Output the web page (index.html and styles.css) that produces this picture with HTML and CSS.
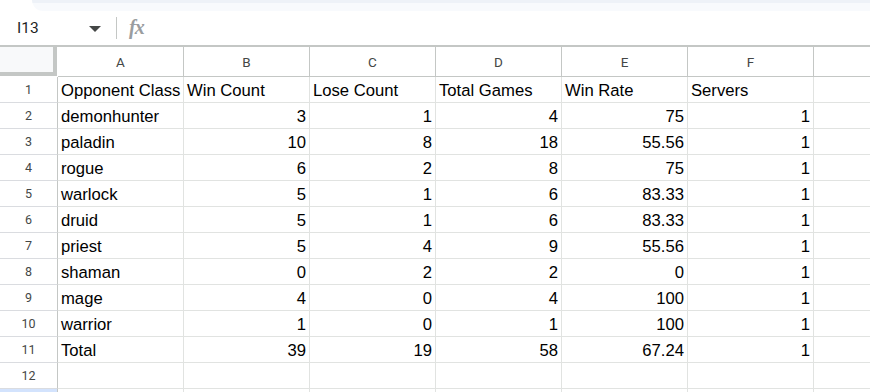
FILE: index.html
```html
<!DOCTYPE html>
<html>
<head>
<meta charset="UTF-8">
<title>Opponent Class Stats</title>
<link rel="stylesheet" href="styles.css">
</head>
<body>
<div class="top-band"></div>
<div class="formula-bar">
  <div class="name-box">
    <span class="cell-ref">I13</span>
    <span class="caret"></span>
  </div>
  <div class="divider"></div>
  <span class="fx">fx</span>
</div>

<div class="sheet">
  <div class="row head-row">
    <div class="corner"></div>
    <div class="col-head">A</div>
    <div class="col-head">B</div>
    <div class="col-head">C</div>
    <div class="col-head">D</div>
    <div class="col-head">E</div>
    <div class="col-head">F</div>
    <div class="col-head"></div>
  </div>
  <div class="row">
    <div class="row-head">1</div>
    <div class="cell">Opponent Class</div>
    <div class="cell">Win Count</div>
    <div class="cell">Lose Count</div>
    <div class="cell">Total Games</div>
    <div class="cell">Win Rate</div>
    <div class="cell">Servers</div>
    <div class="cell"></div>
  </div>
  <div class="row">
    <div class="row-head">2</div>
    <div class="cell">demonhunter</div>
    <div class="cell num">3</div>
    <div class="cell num">1</div>
    <div class="cell num">4</div>
    <div class="cell num">75</div>
    <div class="cell num">1</div>
    <div class="cell"></div>
  </div>
  <div class="row">
    <div class="row-head">3</div>
    <div class="cell">paladin</div>
    <div class="cell num">10</div>
    <div class="cell num">8</div>
    <div class="cell num">18</div>
    <div class="cell num">55.56</div>
    <div class="cell num">1</div>
    <div class="cell"></div>
  </div>
  <div class="row">
    <div class="row-head">4</div>
    <div class="cell">rogue</div>
    <div class="cell num">6</div>
    <div class="cell num">2</div>
    <div class="cell num">8</div>
    <div class="cell num">75</div>
    <div class="cell num">1</div>
    <div class="cell"></div>
  </div>
  <div class="row">
    <div class="row-head">5</div>
    <div class="cell">warlock</div>
    <div class="cell num">5</div>
    <div class="cell num">1</div>
    <div class="cell num">6</div>
    <div class="cell num">83.33</div>
    <div class="cell num">1</div>
    <div class="cell"></div>
  </div>
  <div class="row">
    <div class="row-head">6</div>
    <div class="cell">druid</div>
    <div class="cell num">5</div>
    <div class="cell num">1</div>
    <div class="cell num">6</div>
    <div class="cell num">83.33</div>
    <div class="cell num">1</div>
    <div class="cell"></div>
  </div>
  <div class="row">
    <div class="row-head">7</div>
    <div class="cell">priest</div>
    <div class="cell num">5</div>
    <div class="cell num">4</div>
    <div class="cell num">9</div>
    <div class="cell num">55.56</div>
    <div class="cell num">1</div>
    <div class="cell"></div>
  </div>
  <div class="row">
    <div class="row-head">8</div>
    <div class="cell">shaman</div>
    <div class="cell num">0</div>
    <div class="cell num">2</div>
    <div class="cell num">2</div>
    <div class="cell num">0</div>
    <div class="cell num">1</div>
    <div class="cell"></div>
  </div>
  <div class="row">
    <div class="row-head">9</div>
    <div class="cell">mage</div>
    <div class="cell num">4</div>
    <div class="cell num">0</div>
    <div class="cell num">4</div>
    <div class="cell num">100</div>
    <div class="cell num">1</div>
    <div class="cell"></div>
  </div>
  <div class="row">
    <div class="row-head">10</div>
    <div class="cell">warrior</div>
    <div class="cell num">1</div>
    <div class="cell num">0</div>
    <div class="cell num">1</div>
    <div class="cell num">100</div>
    <div class="cell num">1</div>
    <div class="cell"></div>
  </div>
  <div class="row">
    <div class="row-head">11</div>
    <div class="cell">Total</div>
    <div class="cell num">39</div>
    <div class="cell num">19</div>
    <div class="cell num">58</div>
    <div class="cell num">67.24</div>
    <div class="cell num">1</div>
    <div class="cell"></div>
  </div>
  <div class="row">
    <div class="row-head">12</div>
    <div class="cell"></div>
    <div class="cell"></div>
    <div class="cell"></div>
    <div class="cell"></div>
    <div class="cell"></div>
    <div class="cell"></div>
    <div class="cell"></div>
  </div>
  <div class="row">
    <div class="row-head selected"></div>
    <div class="cell"></div>
    <div class="cell"></div>
    <div class="cell"></div>
    <div class="cell"></div>
    <div class="cell"></div>
    <div class="cell"></div>
    <div class="cell"></div>
  </div>
</div>
</body>
</html>
```

FILE: styles.css
```css
body{margin:0;background:#fff;font-family:"Liberation Sans",Arial,sans-serif;color:#000;overflow:hidden;width:870px;height:392px}

.top-band{height:11px;margin-left:32px;background:linear-gradient(#eef2f8 0,#eef2f8 3px,#f8fafd 3px);border-bottom-left-radius:12px}

.formula-bar{height:34px;display:flex;align-items:center}
.name-box{width:104px;display:flex;align-items:center;padding-left:17px;padding-right:3px;box-sizing:border-box;margin-right:12px}
.cell-ref{font-family:Roboto,"Liberation Sans",sans-serif;font-size:15.5px;color:#1f1f1f;flex:1}
.caret{width:0;height:0;border-left:6px solid transparent;border-right:6px solid transparent;border-top:6px solid #444746;margin-top:2px}
.divider{width:1px;height:22px;background:#c4c7c5}
.fx{font-family:"Liberation Serif",serif;font-style:italic;font-weight:bold;font-size:20px;color:#9a9d9f;margin-left:12px;letter-spacing:-1px;margin-top:-2px}

.sheet{border-top:2px solid #c4c7c5;overflow:hidden;height:345px}
.row{display:grid;grid-template-columns:58px repeat(7,126px);height:26px}
.head-row{height:30px}

.corner{background:#f8f9fa;border-right:4px solid #c4c7c5;border-bottom:4px solid #c4c7c5;box-sizing:border-box;height:29px;width:57px;margin-right:1px}
.col-head{border-right:1px solid #c4c7c5;border-bottom:1px solid #c4c7c5;display:flex;align-items:center;justify-content:center;font-family:Roboto,"Liberation Sans",sans-serif;font-size:13.5px;color:#444746;padding-top:1px}

.row-head{border-right:1px solid #c4c7c5;border-bottom:1px solid #dadce0;display:flex;align-items:center;justify-content:center;font-family:Roboto,"Liberation Sans",sans-serif;font-size:12.5px;color:#444746}
.row-head.selected{background:#d3e3fd}

.cell{border-right:1px solid #e1e3e1;border-bottom:1px solid #e1e3e1;font-size:16.67px;line-height:27px;padding:0 3px;white-space:nowrap;overflow:hidden}
.num{text-align:right}
```
